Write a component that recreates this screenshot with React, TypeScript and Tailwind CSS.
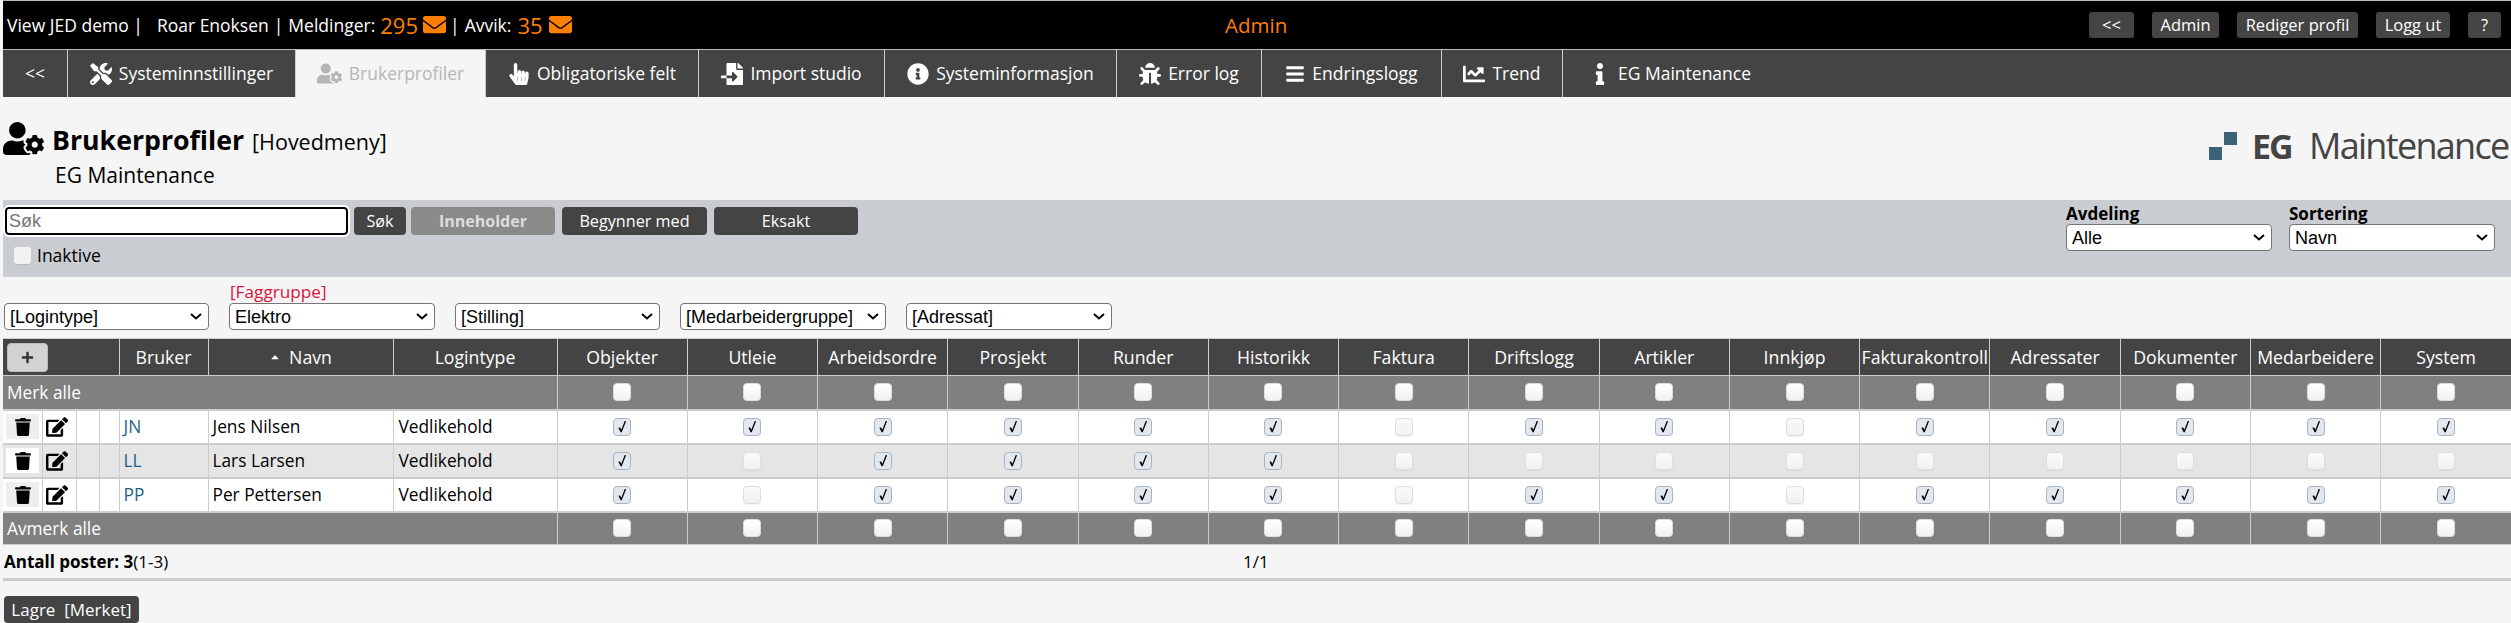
import React from "react";
import { FaTools, FaUserCog, FaHandPointer, FaFileImport, FaInfoCircle, FaBug, FaBars, FaChartLine, FaInfo, FaEnvelope, FaTrash, FaEdit, FaPlus, FaCaretUp } from "react-icons/fa";

const tabs = [
  { label: "<<", w: "w-[65px]" },
  { label: "Systeminnstillinger", w: "w-[228px]", Icon: FaTools, size: "text-[22px]" },
  { label: "Brukerprofiler", w: "w-[190px]", Icon: FaUserCog, active: true, size: "text-[25px]" },
  { label: "Obligatoriske felt", w: "w-[213px]", Icon: FaHandPointer, size: "text-[22px]" },
  { label: "Import studio", w: "w-[186px]", Icon: FaFileImport, size: "text-[22px]" },
  { label: "Systeminformasjon", w: "w-[232px]", Icon: FaInfoCircle, size: "text-[22px]" },
  { label: "Error log", w: "w-[145px]", Icon: FaBug, size: "text-[22px]" },
  { label: "Endringslogg", w: "w-[180px]", Icon: FaBars, size: "text-[20px]" },
  { label: "Trend", w: "w-[121px]", Icon: FaChartLine, size: "text-[22px]" },
  { label: "EG Maintenance", w: "w-[214px]", Icon: FaInfo, last: true, size: "text-[22px]" },
];

const topButtons = [
  { label: "<<", w: "w-[45px]" },
  { label: "Admin", w: "w-[67px]" },
  { label: "Rediger profil", w: "w-[121px]" },
  { label: "Logg ut", w: "w-[74px]" },
  { label: "?", w: "w-[33px]" },
];

const cols = ["Objekter", "Utleie", "Arbeidsordre", "Prosjekt", "Runder", "Historikk", "Faktura", "Driftslogg", "Artikler", "Innkjøp", "Fakturakontroll", "Adressater", "Dokumenter", "Medarbeidere", "System"];

const rows = [
  { init: "JN", name: "Jens Nilsen", checks: [1,1,1,1,1,1,0,1,1,0,1,1,1,1,1], bg: "bg-white", del: "bg-[#eeeeee]" },
  { init: "LL", name: "Lars Larsen", checks: [1,0,1,1,1,1,0,0,0,0,0,0,0,0,0], bg: "bg-[#e5e5e5]", del: "bg-white" },
  { init: "PP", name: "Per Pettersen", checks: [1,0,1,1,1,1,0,1,1,0,1,1,1,1,1], bg: "bg-white", del: "bg-[#eeeeee]" },
];

function Box({ on, strong }: { on?: boolean; strong?: boolean }) {
  if (on) {
    return (
      <span className="mx-auto flex h-[18px] w-[18px] items-center justify-center rounded-[4px] border border-[#a9b4c2] bg-[#e3e8ee]">
        <svg width="10" height="13" viewBox="0 0 11 13"><path d="M1.5 8 L3.5 7.5 L4.8 10 L8.5 0.5 L10 0.8 L5.2 12.8 L4 12.8 Z" fill="#000" /></svg>
      </span>
    );
  }
  return (
    <span className={`mx-auto block h-[18px] w-[18px] rounded-[4px] border ${strong ? "border-[#dddddd] bg-gradient-to-b from-white to-[#f1f1f1]" : "border-[#dedede] bg-gradient-to-b from-[#fafafa] to-[#f2f2f2] shadow-[0_1px_1px_rgba(0,0,0,0.06)]"}`} />
  );
}

function Sel({ value, w }: { value: string; w: string }) {
  return (
    <div className={`flex h-[27px] ${w} items-center justify-between rounded-[4px] border border-[#767676] bg-white pl-[5px] pr-[6px] font-['Liberation_Sans',sans-serif] text-[18px] leading-none text-black`}>
      <span className="whitespace-nowrap">{value}</span>
      <svg className="shrink-0" width="12" height="7" viewBox="0 0 12 7"><path d="M1 1 L6 5.5 L11 1" fill="none" stroke="#000" strokeWidth="2" /></svg>
    </div>
  );
}

export default function App() {
  return (
    <div className="h-[623px] overflow-hidden bg-[#f5f5f5] pl-[3px] font-['Open_Sans',sans-serif] text-[17.3px] text-black">
      {/* top bar */}
      <div className="flex h-[50px] items-center justify-between border-y border-[#bbbbbb] bg-black pr-[10px] text-[17.5px] text-white">
        <div className="flex w-[1000px] items-center whitespace-nowrap pl-[4px]">
          <span>View JED demo |</span>
          <span className="ml-[14px]">Roar Enoksen</span>
          <span className="ml-[5px]">|</span>
          <span className="ml-[5px]">Meldinger:</span>
          <span className="ml-[5px] text-[22px] leading-none text-[#ff7f00]">295</span>
          <FaEnvelope className="ml-[5px] -translate-y-[1px] text-[23px] text-[#ff8000]" />
          <span className="ml-[4px]">|</span>
          <span className="ml-[5px]">Avvik:</span>
          <span className="ml-[6px] text-[22px] leading-none text-[#ff7f00]">35</span>
          <FaEnvelope className="ml-[6px] -translate-y-[1px] text-[23px] text-[#ff8000]" />
        </div>
        <div className="flex-1 pl-[222px] text-[20.5px] text-[#ff7f00]">Admin</div>
        <div className="flex gap-[18px]">
          {topButtons.map((b) => (
            <span key={b.label} className={`flex h-[26px] ${b.w} items-center justify-center rounded-[3px] bg-[#444444] text-[16.5px] leading-none text-white`}>{b.label}</span>
          ))}
        </div>
      </div>

      {/* tabs */}
      <div className="flex h-[47px] bg-[#444444] text-[17.5px]">
        {tabs.map((t) => (
          <div key={t.label} className={`flex ${t.w} items-center justify-center gap-[7px] whitespace-nowrap ${t.last ? "" : "border-r border-[#cccccc]"} ${t.active ? "bg-[#f5f5f5] text-[#b5b5b5]" : "text-white"}`}>
            {t.Icon && <t.Icon className={t.size} />}
            <span>{t.label}</span>
          </div>
        ))}
      </div>

      {/* title */}
      <div className="flex h-[103px] items-start justify-between">
        <div className="pt-[21px]">
          <div className="flex items-center">
            <FaUserCog className="text-[41px]" />
            <div className="flex items-baseline pt-[3px]">
              <span className="ml-[8px] text-[26.7px] font-bold leading-none">Brukerprofiler</span>
              <span className="ml-[8px] text-[21.5px] leading-none">[Hovedmeny]</span>
            </div>
          </div>
          <div className="ml-[52px] mt-[6px] text-[21px] leading-none">EG Maintenance</div>
        </div>
        <div className="flex items-center whitespace-nowrap pt-[35px] text-[#444444]">
          <svg width="28" height="28" viewBox="0 0 28 28"><rect x="0" y="15" width="13" height="13" fill="#3d6277" /><rect x="15" y="0" width="13" height="13" fill="#3d6277" /></svg>
          <span className="ml-[15px] w-[39px] text-[34px] font-bold leading-[28px] tracking-[-2px]">EG</span>
          <span className="ml-[18px] w-[202px] text-[36px] leading-[28px] tracking-[-1.7px]">Maintenance</span>
        </div>
      </div>

      {/* filter panel */}
      <div className="flex h-[77px] justify-between bg-[#c9ccd1] pl-[2px] pr-[16px]">
        <div className="pt-[7px]">
          <div className="flex items-center text-[16.2px]">
            <div className="flex h-[28px] w-[343px] items-center rounded-[4px] border-2 border-black bg-white pl-[2px] font-['Liberation_Sans',sans-serif] text-[18px] text-[#757575] outline outline-2 outline-white">Søk</div>
            <span className="ml-[6px] flex h-[28px] w-[52px] items-center justify-center rounded-[4px] bg-[#444444] text-white">Søk</span>
            <span className="ml-[5px] flex h-[28px] w-[144px] items-center justify-center rounded-[4px] bg-[#8a8a8a] text-[16px] font-bold text-[#dddddd]">Inneholder</span>
            <span className="ml-[7px] flex h-[28px] w-[145px] items-center justify-center rounded-[4px] bg-[#444444] text-white">Begynner med</span>
            <span className="ml-[7px] flex h-[28px] w-[144px] items-center justify-center rounded-[4px] bg-[#444444] text-white">Eksakt</span>
          </div>
          <div className="mt-[12px] flex items-center pl-[9px]">
            <span className="block h-[17px] w-[17px] rounded-[3px] bg-[#f2f2f2] shadow-[0_1px_1px_rgba(0,0,0,0.1)]" />
            <span className="ml-[6px] text-[17.5px] leading-none">Inaktive</span>
          </div>
        </div>
        <div className="flex gap-[17px] pt-[4px]">
          <div>
            <div className="text-[17px] font-bold leading-[20px]">Avdeling</div>
            <Sel value="Alle" w="w-[206px]" />
          </div>
          <div>
            <div className="text-[17px] font-bold leading-[20px]">Sortering</div>
            <Sel value="Navn" w="w-[206px]" />
          </div>
        </div>
      </div>

      {/* select row */}
      <div className="flex h-[61px] items-end gap-[20px] pb-[8px] pl-[1px]">
        <Sel value="[Logintype]" w="w-[205px]" />
        <div className="relative">
          <span className="absolute left-[1px] top-[-21px] whitespace-nowrap text-[17.2px] leading-[20px] text-[#dc143c]">[Faggruppe]</span>
          <Sel value="Elektro" w="w-[206px]" />
        </div>
        <Sel value="[Stilling]" w="w-[205px]" />
        <Sel value="[Medarbeidergruppe]" w="w-[206px]" />
        <Sel value="[Adressat]" w="w-[206px]" />
      </div>

      {/* table */}
      <table className="w-[2508px] table-fixed border-collapse border-y border-[#cccccc]">
        <colgroup>
          <col className="w-[39px]" />
          <col className="w-[34px]" />
          <col className="w-[23px]" />
          <col className="w-[20px]" />
          <col className="w-[89px]" />
          <col className="w-[185px]" />
          <col className="w-[164px]" />
          {cols.map((c) => <col key={c} />)}
        </colgroup>
        <thead>
          <tr className="h-[37px] bg-[#444444] text-[17.7px] text-white">
            <th colSpan={4} className="border-r border-[#cccccc] pl-[4px] text-left font-normal">
              <span className="flex h-[29px] w-[41px] items-center justify-center rounded-[4px] border border-[#bbbbbb] bg-[#d2d2d2] text-[#333333]"><FaPlus className="text-[13px]" /></span>
            </th>
            <th className="border-r border-[#cccccc] font-normal">Bruker</th>
            <th className="border-r border-[#cccccc] font-normal">
              <span className="inline-flex items-center gap-[8px]"><FaCaretUp className="text-[12px]" />Navn</span>
            </th>
            <th className="border-r border-[#cccccc] font-normal">Logintype</th>
            {cols.map((c, i) => (
              <th key={c} className={`overflow-hidden whitespace-nowrap font-normal ${i < cols.length - 1 ? "border-r border-[#cccccc]" : ""}`}>{c}</th>
            ))}
          </tr>
        </thead>
        <tbody>
          <tr className="h-[34px] border-t border-[#cccccc] bg-[#808080] text-white">
            <td colSpan={7} className="border-r border-[#cccccc] pl-[4px] pt-[2px]">Merk alle</td>
            {cols.map((c, i) => <td key={c} className={i < cols.length - 1 ? "border-r border-[#cccccc]" : ""}><Box strong /></td>)}
          </tr>
          {rows.map((r) => (
            <tr key={r.init} className={`h-[34px] border-t-2 border-[#cccccc] ${r.bg}`}>
              <td className="border-r border-[#cccccc] p-0">
                <span className={`ml-[3px] flex h-[25px] w-[33px] items-center justify-center ${r.del}`}><FaTrash className="text-[18px]" /></span>
              </td>
              <td className="border-r border-[#cccccc] pl-[3px]"><FaEdit className="text-[22px]" /></td>
              <td className="border-r border-[#cccccc]" />
              <td className="border-r border-[#cccccc]" />
              <td className="border-r border-[#cccccc] pl-[4px] text-[#245d85]">{r.init}</td>
              <td className="border-r border-[#cccccc] pl-[4px]">{r.name}</td>
              <td className="border-r border-[#cccccc] pl-[5px]">Vedlikehold</td>
              {r.checks.map((on, i) => <td key={i} className={i < 14 ? "border-r border-[#cccccc]" : ""}><Box on={!!on} /></td>)}
            </tr>
          ))}
          <tr className="h-[33px] border-t-2 border-[#cccccc] bg-[#808080] text-white">
            <td colSpan={7} className="border-r border-[#cccccc] pl-[4px] pt-[2px]">Avmerk alle</td>
            {cols.map((c, i) => <td key={c} className={i < cols.length - 1 ? "border-r border-[#cccccc]" : ""}><Box strong /></td>)}
          </tr>
        </tbody>
      </table>

      {/* footer */}
      <div className="relative flex h-[33px] items-center pl-[1px] text-[17px]">
        <span><b>Antall poster: 3</b>(1-3)</span>
        <span className="absolute left-[1240px]">1/1</span>
      </div>
      <div className="h-[3px] bg-[#cccccc]" />
      <div className="pl-[1px] pt-[15px]">
        <span className="flex h-[27px] w-[135px] items-center justify-center whitespace-nowrap rounded-[4px] bg-[#444444] text-[17px] leading-none text-white">Lagre&nbsp; [Merket]</span>
      </div>
    </div>
  );
}
